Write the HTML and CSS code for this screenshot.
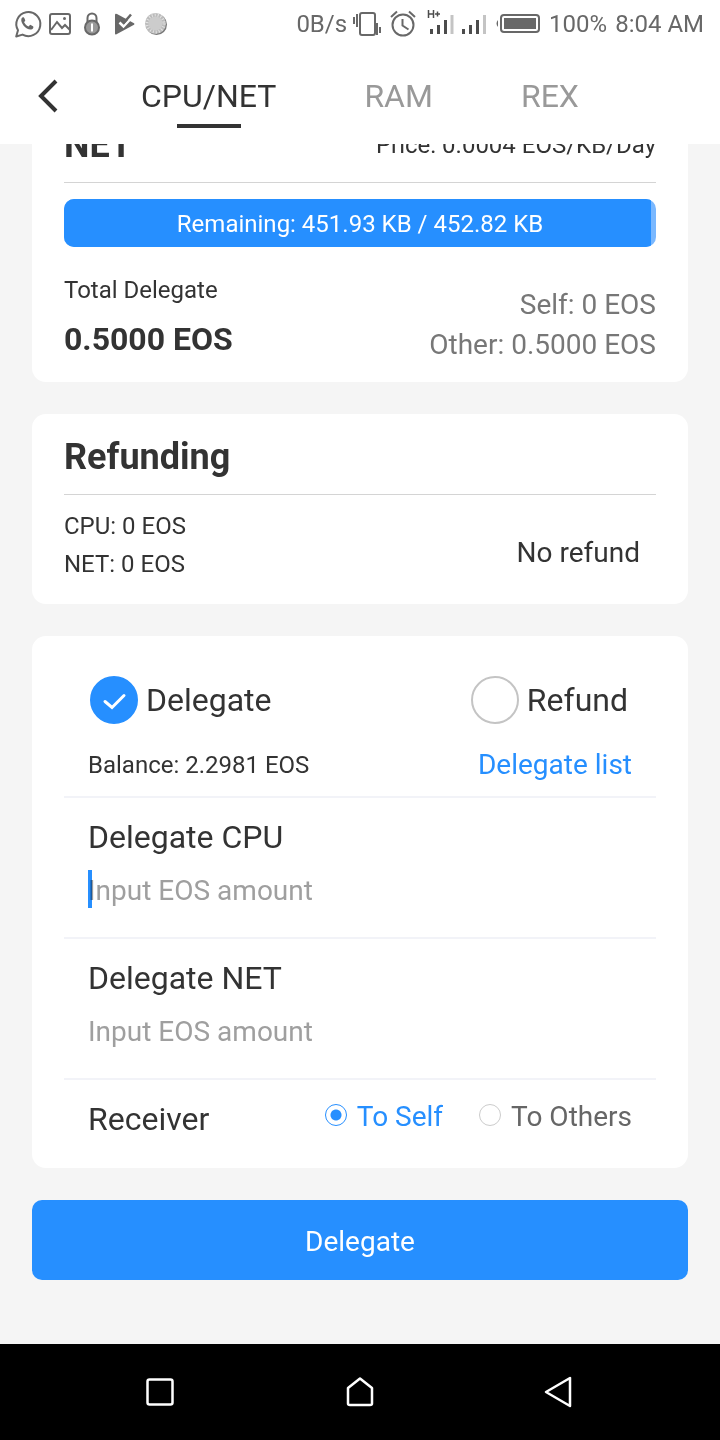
FILE: index.html
```html
<!DOCTYPE html>
<html lang="en">
<head>
<meta charset="utf-8">
<meta name="viewport" content="width=device-width, initial-scale=1">
<title>CPU/NET</title>
<link rel="stylesheet" href="styles.css">
</head>
<body>
<div class="statusbar">
  <div class="status-group">
    <svg width="26" height="28" viewBox="0 0 26 28" fill="none" stroke="#686868" stroke-width="2"><path d="M2.200 26.500 4 20.200A12 12 0 1 1 8.500 24.600Z" stroke-linejoin="round"/><path d="M7.500 8.500c1-1.800 2.500-1.500 3 0l.8 2-1.200 1.800c1 1.900 2.300 3.200 4.400 4.200l1.700-1.700 2.800 1.400c1 .7.200 2.900-1.700 3.300-4.500 1-11.500-6.500-9.800-11Z" fill="#686868" stroke="none"/></svg>
    <svg width="24" height="24" viewBox="0 0 24 24" fill="none" stroke="#686868" stroke-width="2"><rect x="2" y="2" width="20" height="20" rx="2"/><path d="m3 18 6-8 5 6 3-3 5 5"/><circle cx="16.500" cy="6.500" r="1.500" fill="#686868" stroke="none"/></svg>
    <svg width="24" height="24" viewBox="0 0 24 24"><path d="M7.500 10V6a4.500 4.500 0 0 1 9 0v4" fill="none" stroke="#686868" stroke-width="2"/><circle cx="12" cy="15.500" r="7" fill="#999" stroke="#686868" stroke-width="2"/><path d="M12 11.500v8" stroke="#fff" stroke-width="2"/></svg>
    <svg width="24" height="24" viewBox="0 0 24 24"><path d="M3 3v18.500q0 1.500 1.500.8L22 12.800q1-.8 0-1.500L5 2Q3 1 3 3Z" fill="#686868"/><path d="m7.500 10.500 4 4L19 6.500" fill="none" stroke="#fff" stroke-width="2.500"/><path d="m10 8 2 2.500 7-8" fill="none" stroke="#686868" stroke-width="2.500"/></svg>
    <svg width="24" height="24" viewBox="0 0 24 24"><circle cx="12.500" cy="12.500" r="10.500" fill="#777"/><circle cx="11.500" cy="11.500" r="10.500" fill="#bbb"/><circle cx="11.500" cy="11.500" r="8.500" fill="none" stroke="#e4e4e4" stroke-width="3" stroke-dasharray="1 2"/><circle cx="11.500" cy="11.500" r="7" fill="#ccc"/></svg>
  </div>
  <div class="status-group">
    <span>0B/s</span>
    <svg width="28" height="28" viewBox="2 0 28 28" fill="none" stroke="#686868" stroke-width="2"><rect x="7" y="3" width="15" height="22" rx="2"/><path d="M1 7v7M4 4v13M24 13v12M27 17v6"/></svg>
    <svg width="28" height="28" viewBox="1 0 28 28" fill="none" stroke="#686868" stroke-width="2"><circle cx="13" cy="15" r="10.500"/><path d="M12.500 9v6.500l6 4M1 7l6-5.500M25 7l-6-5.500"/></svg>
    <svg width="26" height="28" viewBox="0 0 26 28" stroke="#4c4c4c" stroke-width="3"><path d="M4.500 19v5M11.500 15v9M18.500 10v14"/><path d="M25 5v19" stroke="#c4c4c4"/><path d="M1.500 0v8M6.500 0v8M1.500 4h5M8 4h5M10.500 1.500v5" stroke-width="1.500"/></svg>
    <svg width="26" height="28" viewBox="0 0 26 28" stroke="#4c4c4c" stroke-width="3"><path d="M2.500 19v5M9.500 15v9M16.500 10v14"/><path d="M23.500 5v19" stroke="#c4c4c4"/></svg>
    <svg width="46" height="28" viewBox="0 0 46 28" fill="none" stroke="#686868" stroke-width="2"><rect x="6" y="5" width="38" height="17" rx="3"/><path d="M9 8h32v11H9Z" fill="#686868" stroke="none"/><path d="M3 10q-3 3.500 0 7Z" fill="#686868" stroke="none"/></svg>
    <span>100%</span>
    <span>8:04 AM</span>
  </div>
</div>

<header class="header">
  <button class="back" type="button" aria-label="Back"><svg width="24" height="36" viewBox="0 0 24 36" fill="none" stroke="#333" stroke-width="4"><path d="M20 3 5 18l15 15"/></svg></button>
  <nav class="tabs">
    <a class="tab tab-active" href="#cpunet">CPU/NET</a>
    <a class="tab" href="#ram">RAM</a>
    <a class="tab" href="#rex">REX</a>
  </nav>
</header>

<main class="content">
  <section class="card card-scrolled">
    <div class="card-head"><h2 class="card-title">NET</h2><span class="price">Price: 0.0004 EOS/KB/Day</span></div>
    <div class="meter"><div class="meter-fill" style="width:99.2%"></div><span class="meter-text">Remaining: 451.93 KB / 452.82 KB</span></div>
    <div class="totals">
      <div><p class="total-label">Total Delegate</p><p class="total-value">0.5000 EOS</p></div>
      <div class="split"><p>Self: 0 EOS</p><p>Other: 0.5000 EOS</p></div>
    </div>
  </section>

  <section class="card">
    <div class="card-head"><h2 class="card-title">Refunding</h2></div>
    <div class="refund-body">
      <div class="refund-lines"><p>CPU: 0 EOS</p><p>NET: 0 EOS</p></div>
      <p class="refund-state">No refund</p>
    </div>
  </section>

  <form class="form" id="delegate-form">
    <div class="card card-form">
      <div class="modes">
        <label class="mode"><span class="mode-control"><input class="mode-input" type="radio" name="mode" checked><svg class="mode-tick" width="48" height="48" viewBox="0 0 48 48" fill="none" stroke="#fff" stroke-width="3" stroke-linecap="round"><path d="m15 25.500 7 6 12-12"/></svg></span>Delegate</label>
        <label class="mode"><span class="mode-control"><input class="mode-input" type="radio" name="mode"></span>Refund</label>
      </div>
      <div class="balance"><span>Balance: 2.2981 EOS</span><a class="list-link" href="#list">Delegate list</a></div>
      <div class="field">
        <label class="field-label" for="cpu">Delegate CPU</label>
        <div class="field-box"><input class="field-input" id="cpu" type="text" placeholder="Input EOS amount"><span class="caret"></span></div>
      </div>
      <div class="field">
        <label class="field-label" for="net">Delegate NET</label>
        <div class="field-box"><input class="field-input" id="net" type="text" placeholder="Input EOS amount"></div>
      </div>
      <div class="receiver" role="radiogroup" aria-labelledby="receiver-label">
        <span class="field-label" id="receiver-label">Receiver</span>
        <div class="receiver-options">
          <label class="option option-on"><input class="option-input" type="radio" name="receiver" checked>To Self</label>
          <label class="option"><input class="option-input" type="radio" name="receiver">To Others</label>
        </div>
      </div>
    </div>
    <button class="submit" type="button">Delegate</button>
  </form>
</main>

<footer class="navbar">
  <button class="nav-button" type="button" aria-label="Recent apps"><svg width="32" height="32" viewBox="0 0 32 32"><rect x="3.500" y="3.500" width="25" height="25" rx="2"/></svg></button>
  <button class="nav-button" type="button" aria-label="Home"><svg width="32" height="32" viewBox="0 0 32 32"><path d="M16 2.500 28 12v15.500q0 1.500-2 1.500H6q-2 0-2-1.500V12Z"/></svg></button>
  <button class="nav-button" type="button" aria-label="Back"><svg width="32" height="32" viewBox="0 0 32 32"><path d="M26 2v28L2 16Z"/></svg></button>
</footer>
</body>
</html>
```
FILE: styles.css
```css
* { box-sizing: border-box; }
body {
  margin: 0;
  min-height: 100vh;
  display: flex;
  flex-direction: column;
  background: #f5f5f5;
  color: #333;
  font-family: Roboto, "Liberation Sans", sans-serif;
  font-size: 24px;
}
p, h2 { margin: 0; }
button { padding: 0; border: 0; font: inherit; background: none; }
a { text-decoration: none; }
svg { display: block; flex: none; overflow: visible; }

.statusbar {
  display: flex;
  justify-content: space-between;
  height: 48px;
  padding: 0 16px 0 14px;
  background: #fff;
  color: #686868;
}
.status-group { display: flex; align-items: center; gap: 8px; line-height: 50px; white-space: nowrap; }

.header { display: flex; align-items: center; height: 96px; padding: 0 36px; background: #fff; }
.tabs { display: flex; gap: 88px; margin-left: 81px; }
.tab { position: relative; color: #999; font-size: 32px; line-height: 98px; }
.tab-active { color: #333; }
.tab-active::after {
  content: "";
  position: absolute;
  left: 50%;
  bottom: 17px;
  width: 64px;
  height: 4px;
  margin-left: -32px;
  background: #333;
}

.content {
  flex: 1;
  display: flex;
  flex-direction: column;
  gap: 32px;
  padding: 0 32px 64px;
  overflow: hidden;
}
.card { padding: 0 32px; border-radius: 14px; background: #fff; }
.card-scrolled { margin-top: -42px; padding-bottom: 19px; }
.card-head {
  display: flex;
  justify-content: space-between;
  align-items: center;
  height: 81px;
  padding-top: 6px;
  border-bottom: 1px solid #d4d4d4;
}
.card-title { font-size: 36px; line-height: 40px; }

.meter {
  position: relative;
  margin-top: 16px;
  height: 48px;
  border-radius: 10px;
  overflow: hidden;
  background: #7ab8ff;
  color: #fff;
  text-align: center;
  line-height: 50px;
}
.meter-fill { position: absolute; top: 0; bottom: 0; left: 0; background: #268fff; }
.meter-text { position: relative; }
.totals { display: flex; justify-content: space-between; align-items: flex-end; padding-top: 24px; }
.total-label { line-height: 38px; }
.total-value { font-size: 32px; font-weight: 700; line-height: 40px; margin: 10px 0 4px; }
.split { color: #777; font-size: 28px; line-height: 40px; text-align: right; margin-bottom: -2px; }

.refund-body {
  display: flex;
  justify-content: space-between;
  align-items: center;
  padding: 12px 16px 21px 0;
}
.refund-lines { line-height: 38px; }
.refund-state { font-size: 28px; line-height: 40px; padding-top: 16px; }

.form { display: flex; flex-direction: column; gap: 32px; }
.card-form { padding-top: 40px; }
.modes { display: flex; justify-content: space-between; padding: 0 28px 0 26px; }
.mode { display: flex; align-items: center; gap: 8px; height: 48px; font-size: 32px; line-height: 50px; }
.mode-control { display: grid; }
.mode-input, .mode-tick { grid-area: 1 / 1; }
.mode-tick { pointer-events: none; }
.mode-input {
  appearance: none;
  width: 48px;
  height: 48px;
  margin: 0;
  border: 2px solid #c4c4c4;
  border-radius: 50%;
}
.mode-input:checked { border-color: #268fff; background: #268fff; }
.balance {
  display: flex;
  justify-content: space-between;
  align-items: center;
  margin-top: 20px;
  padding: 0 24px 10px;
  line-height: 42px;
}
.list-link { color: #268fff; font-size: 28px; }
.field { padding: 15px 24px 24px; border-top: 2px solid #f2f3f8; }
.field-label { display: block; font-size: 32px; line-height: 48px; }
.field-box { position: relative; padding: 9px 0 5px; }
.field-input {
  display: block;
  width: 100%;
  height: 38px;
  padding: 2px 0 0;
  border: 0;
  outline: 0;
  background: none;
  color: #333;
  font: 28px Roboto, "Liberation Sans", sans-serif;
}
.field-input::placeholder { color: #9f9f9f; opacity: 1; }
.caret {
  position: absolute;
  top: 9px;
  left: 0;
  width: 4px;
  height: 38px;
  background: #268fff;
  mix-blend-mode: multiply;
}
.receiver {
  display: flex;
  justify-content: space-between;
  padding: 15px 24px 25px;
  border-top: 2px solid #f2f3f8;
}
.receiver-options { display: flex; gap: 36px; line-height: 42px; }
.option { display: flex; align-items: center; gap: 10px; height: 44px; color: #666; font-size: 28px; }
.option-on { color: #268fff; }
.option-input {
  appearance: none;
  width: 22px;
  height: 22px;
  margin: 0 0 4px;
  border: 1px solid #ccc;
  border-radius: 50%;
}
.option-input:checked {
  border-color: #268fff;
  background: radial-gradient(circle, #268fff 5px, transparent 6px);
}
.submit {
  height: 80px;
  padding-top: 3px;
  border-radius: 10px;
  background: #268fff;
  color: #fff;
  font-size: 28px;
}

.navbar { display: flex; justify-content: space-between; align-items: center; height: 96px; padding: 0 144px; background: #000; }
.nav-button svg { fill: none; stroke: #fff; stroke-width: 2.5; stroke-linejoin: round; }
```
